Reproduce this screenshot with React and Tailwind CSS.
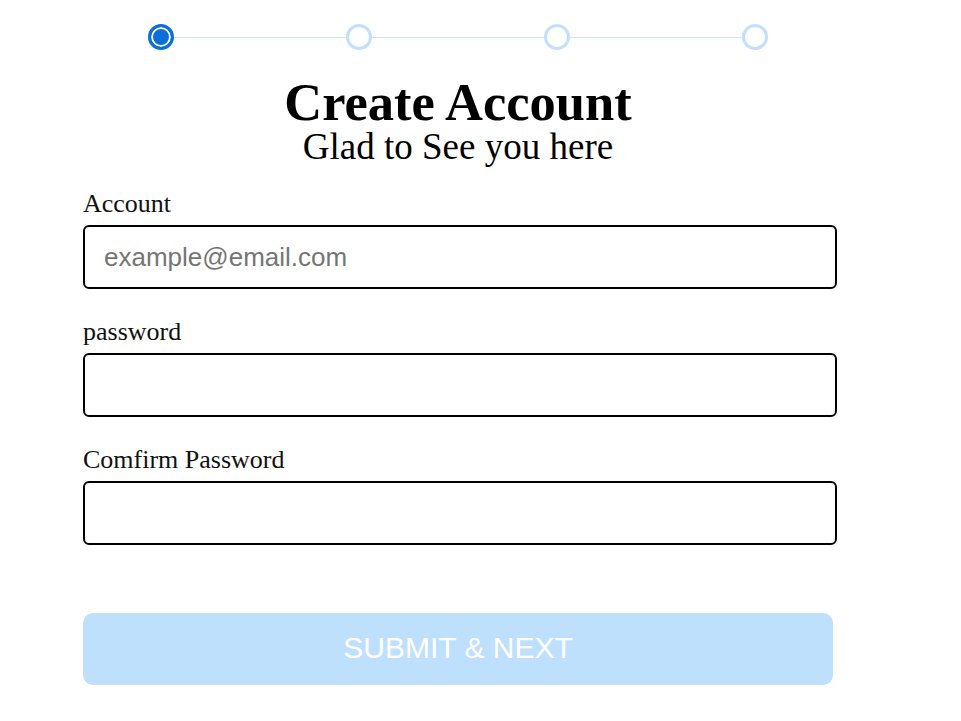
import React from "react";

const steps = [0, 1, 2, 3];

function Step({ active }) {
  if (active) {
    return (
      <div className="h-[26px] w-[26px] shrink-0 rounded-full border-[3px] border-[#0a6fdb] bg-[#0a6fdb] shadow-[inset_0_0_0_2px_white]" />
    );
  }
  return <div className="h-[26px] w-[26px] shrink-0 rounded-full border-[3px] border-[#c2e0fd] bg-white" />;
}

function Field({ label, placeholder, type = "text", first }) {
  return (
    <div className={first ? "" : "mt-[27px]"}>
      <label className="mb-[5px] block text-[26px] leading-[32px] text-[#111]">{label}</label>
      <input
        type={type}
        placeholder={placeholder}
        className="box-border block h-[64px] w-[754px] rounded-[6px] border-2 border-black bg-white px-[19px] font-['Liberation_Sans',Arial,sans-serif] text-[26px] text-black outline-none placeholder:text-[#757575]"
      />
    </div>
  );
}

export default function App() {
  return (
    <div className="min-h-screen bg-white font-['Liberation_Serif','Times_New_Roman',serif] text-black">
      <div className="ml-[83px] w-[750px] pt-[24px] pb-[36px]">
        <div className="mx-auto flex w-[620px] items-center">
          {steps.map((s) => (
            <React.Fragment key={s}>
              {s > 0 && <div className="h-px flex-1 bg-[#cfe5fb]" />}
              <Step active={s === 0} />
            </React.Fragment>
          ))}
        </div>

        <h1 className="mt-[26px] text-center text-[52.5px] font-bold leading-[52px]">Create Account</h1>
        <p className="text-center text-[37px] leading-[38px]">Glad to See you here</p>

        <form className="mt-[22px]" onSubmit={(e) => e.preventDefault()}>
          <Field first label="Account" placeholder="example@email.com" />
          <Field label="password" type="password" />
          <Field label="Comfirm Password" type="password" />

          <button
            type="submit"
            className="mt-[68px] block h-[72px] w-[750px] rounded-[10px] bg-[#bfe0fd] pb-[3px] font-['Liberation_Sans',Arial,sans-serif] text-[30px] text-white"
          >
            SUBMIT &amp; NEXT
          </button>
        </form>
      </div>
    </div>
  );
}
